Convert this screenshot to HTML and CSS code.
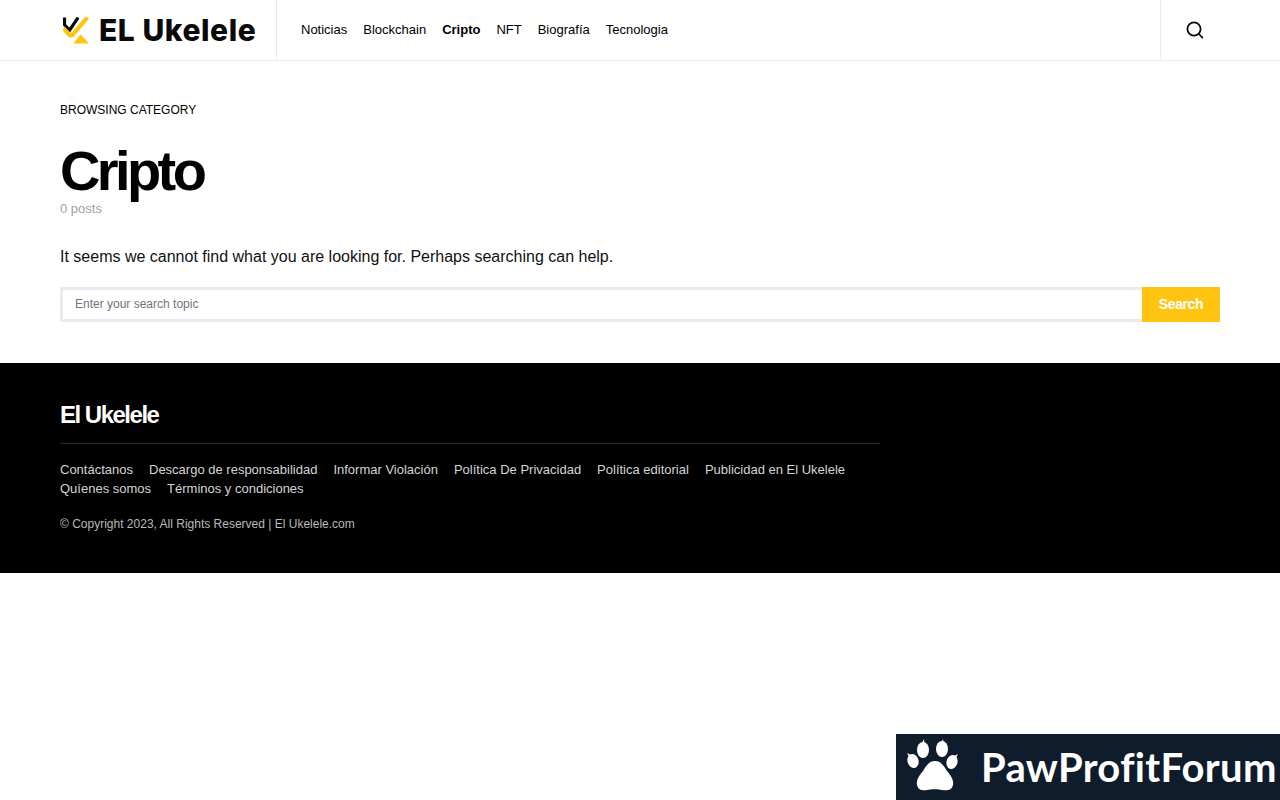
FILE: index.html
```html
<!DOCTYPE html>
<html>
  <head>
    <title>Cripto - El Ukelele</title>
    <link rel="stylesheet" href="styles.css">
  </head>
  <body>
    <header class="site-header">
      <div class="logo-cell">
        <a class="logo" href="#">
          <svg class="logo-mark" width="27" height="27" viewBox="0 0 26 26" fill="none">
            <path d="M1.500 0.500 L1.500 7.500 L6.500 12.500 L14.500 0.500" stroke="#0a0a0a" stroke-width="3"/>
            <path d="M0.500 11 L6.500 17.500 L9 17.500 L23.500 0.500" stroke="#ffc40f" stroke-width="4"/>
            <path d="M17 16.500 L25 25.500 L10 25.500 Z" fill="#ffc40f"/>
          </svg>
          <span class="logo-text">EL Ukelele</span>
        </a>
      </div>
      <nav class="main-nav">
        <a href="#">Noticias</a>
        <a href="#">Blockchain</a>
        <a class="current" href="#">Cripto</a>
        <a href="#">NFT</a>
        <a href="#">Biografía</a>
        <a href="#">Tecnologia</a>
      </nav>
      <div class="search-cell">
        <svg width="18" height="18" viewBox="0 0 18 18" fill="none" stroke="#0a0a0a" stroke-width="1.8" stroke-linecap="round">
          <circle cx="8" cy="8" r="6.600"/>
          <path d="M13 13 L16.400 16.600"/>
        </svg>
      </div>
    </header>

    <main class="content">
      <p class="crumb">Browsing Category</p>
      <h1>Cripto</h1>
      <p class="post-count">0 posts</p>
      <p class="no-results">It seems we cannot find what you are looking for. Perhaps searching can help.</p>
      <form class="search-form" onsubmit="event.preventDefault()">
        <input type="text" placeholder="Enter your search topic">
        <button type="submit">Search</button>
      </form>
    </main>

    <footer class="site-footer">
      <div class="footer-inner">
        <div class="footer-title">El Ukelele</div>
        <div class="footer-links">
          <a href="#">Contáctanos</a>
          <a href="#">Descargo de responsabilidad</a>
          <a href="#">Informar Violación</a>
          <a href="#">Política De Privacidad</a>
          <a href="#">Política editorial</a>
          <a href="#">Publicidad en El Ukelele</a>
          <a href="#">Quíenes somos</a>
          <a href="#">Términos y condiciones</a>
        </div>
        <p class="copyright">© Copyright 2023, All Rights Reserved | El Ukelele.com</p>
      </div>
    </footer>

    <a class="paw-banner" href="#">
      <svg width="54" height="56" viewBox="0 0 54 56" fill="#fff">
        <ellipse cx="7" cy="22" rx="5.500" ry="7" transform="rotate(-18 7 22)"/>
        <ellipse cx="17" cy="11" rx="6" ry="8"/>
        <ellipse cx="36" cy="10" rx="6" ry="8"/>
        <ellipse cx="46" cy="23" rx="5.500" ry="7" transform="rotate(18 46 23)"/>
        <path d="M17.500 0 L19 5 L16 5 Z M37 0 L38 5 L35 5 Z M1 14 L5 16 L3 18 Z M52 15 L48 17 L50 19 Z"/>
        <path d="M29 22 C23 22 20 27 17 32 C13 37 10 41 11 46 C12 51 17 52 21 51 C25 50 32 50 36 51 C41 52 46 51 47 46 C48 41 45 37 41 32 C38 27 35 22 29 22 Z"/>
      </svg>
      <span>PawProfitForum</span>
    </a>
  </body>
</html>
```
FILE: styles.css
```css
body {
  margin: 0;
  font-family: "Liberation Sans", Arial, sans-serif;
  color: #000;
  background: #fff;
}

a {
  color: inherit;
  text-decoration: none;
}

.site-header {
  display: flex;
  height: 60px;
  border-bottom: 1px solid #e9ecef;
}

.logo-cell {
  display: flex;
  align-items: center;
  width: 216px;
  padding-left: 60px;
  border-right: 1px solid #e9ecef;
}

.logo {
  display: flex;
  align-items: center;
  gap: 9px;
}

.logo-mark {
  margin-left: 3px;
}

.logo-text {
  font-family: Inter, sans-serif;
  font-size: 30px;
  font-weight: 800;
  letter-spacing: 0.55px;
  color: #0a0a0a;
}

.main-nav {
  display: flex;
  align-items: center;
  gap: 16px;
  flex: 1;
  padding: 0 0 2px 24px;
  font-size: 13px;
}

.main-nav .current {
  font-weight: bold;
}

.search-cell {
  display: flex;
  align-items: center;
  width: 94px;
  padding-left: 25px;
  border-left: 1px solid #e9ecef;
}

.content {
  padding: 42px 60px 41px;
}

.crumb {
  margin: 0;
  font-size: 12px;
  line-height: 14px;
  text-transform: uppercase;
}

.content h1 {
  margin: 23px 0 0;
  font-size: 56px;
  line-height: 61px;
  font-weight: bold;
  letter-spacing: -3.6px;
  color: #000;
}

.post-count {
  margin: 0;
  font-size: 13px;
  line-height: 15px;
  color: #a0a0a8;
}

.no-results {
  margin: 29px 0 0;
  font-size: 16px;
  line-height: 24px;
  color: #111;
}

.search-form {
  display: flex;
  margin-top: 18px;
  height: 35px;
}

.search-form input {
  flex: 1;
  padding: 0 12px 2px;
  border: 3px solid #e9ebee;
  border-right: none;
  outline: none;
  font-family: inherit;
  font-size: 12px;
  color: #333;
}

.search-form input::placeholder {
  color: #72727f;
  opacity: 1;
}

.search-form button {
  width: 78px;
  border: none;
  padding: 0 0 2px;
  background: #ffc412;
  color: #fff;
  font-family: inherit;
  font-size: 14px;
  font-weight: bold;
  letter-spacing: -0.4px;
}

.site-footer {
  height: 210px;
  background: #000;
  color: #d4d4d4;
}

.footer-inner {
  width: 820px;
  margin-left: 60px;
  padding-top: 37px;
}

.footer-title {
  padding-bottom: 13px;
  border-bottom: 1px solid #2e2e2e;
  font-size: 24px;
  line-height: 30px;
  font-weight: bold;
  letter-spacing: -1.5px;
  color: #fff;
}

.footer-links {
  display: flex;
  flex-wrap: wrap;
  gap: 0 16px;
  margin-top: 16px;
  font-size: 13px;
  line-height: 19px;
}

.copyright {
  margin: 19px 0 0;
  font-size: 12px;
  line-height: 14px;
  color: #b9b9b9;
}

.paw-banner {
  position: fixed;
  right: 0;
  bottom: 0;
  display: flex;
  align-items: center;
  gap: 21px;
  width: 374px;
  height: 66px;
  padding-left: 10px;
  overflow: hidden;
  background: #0e1c2b;
  color: #fff;
  font-family: Lato, sans-serif;
  font-size: 40px;
  font-weight: 700;
  letter-spacing: 0.3px;
  white-space: nowrap;
}
```
